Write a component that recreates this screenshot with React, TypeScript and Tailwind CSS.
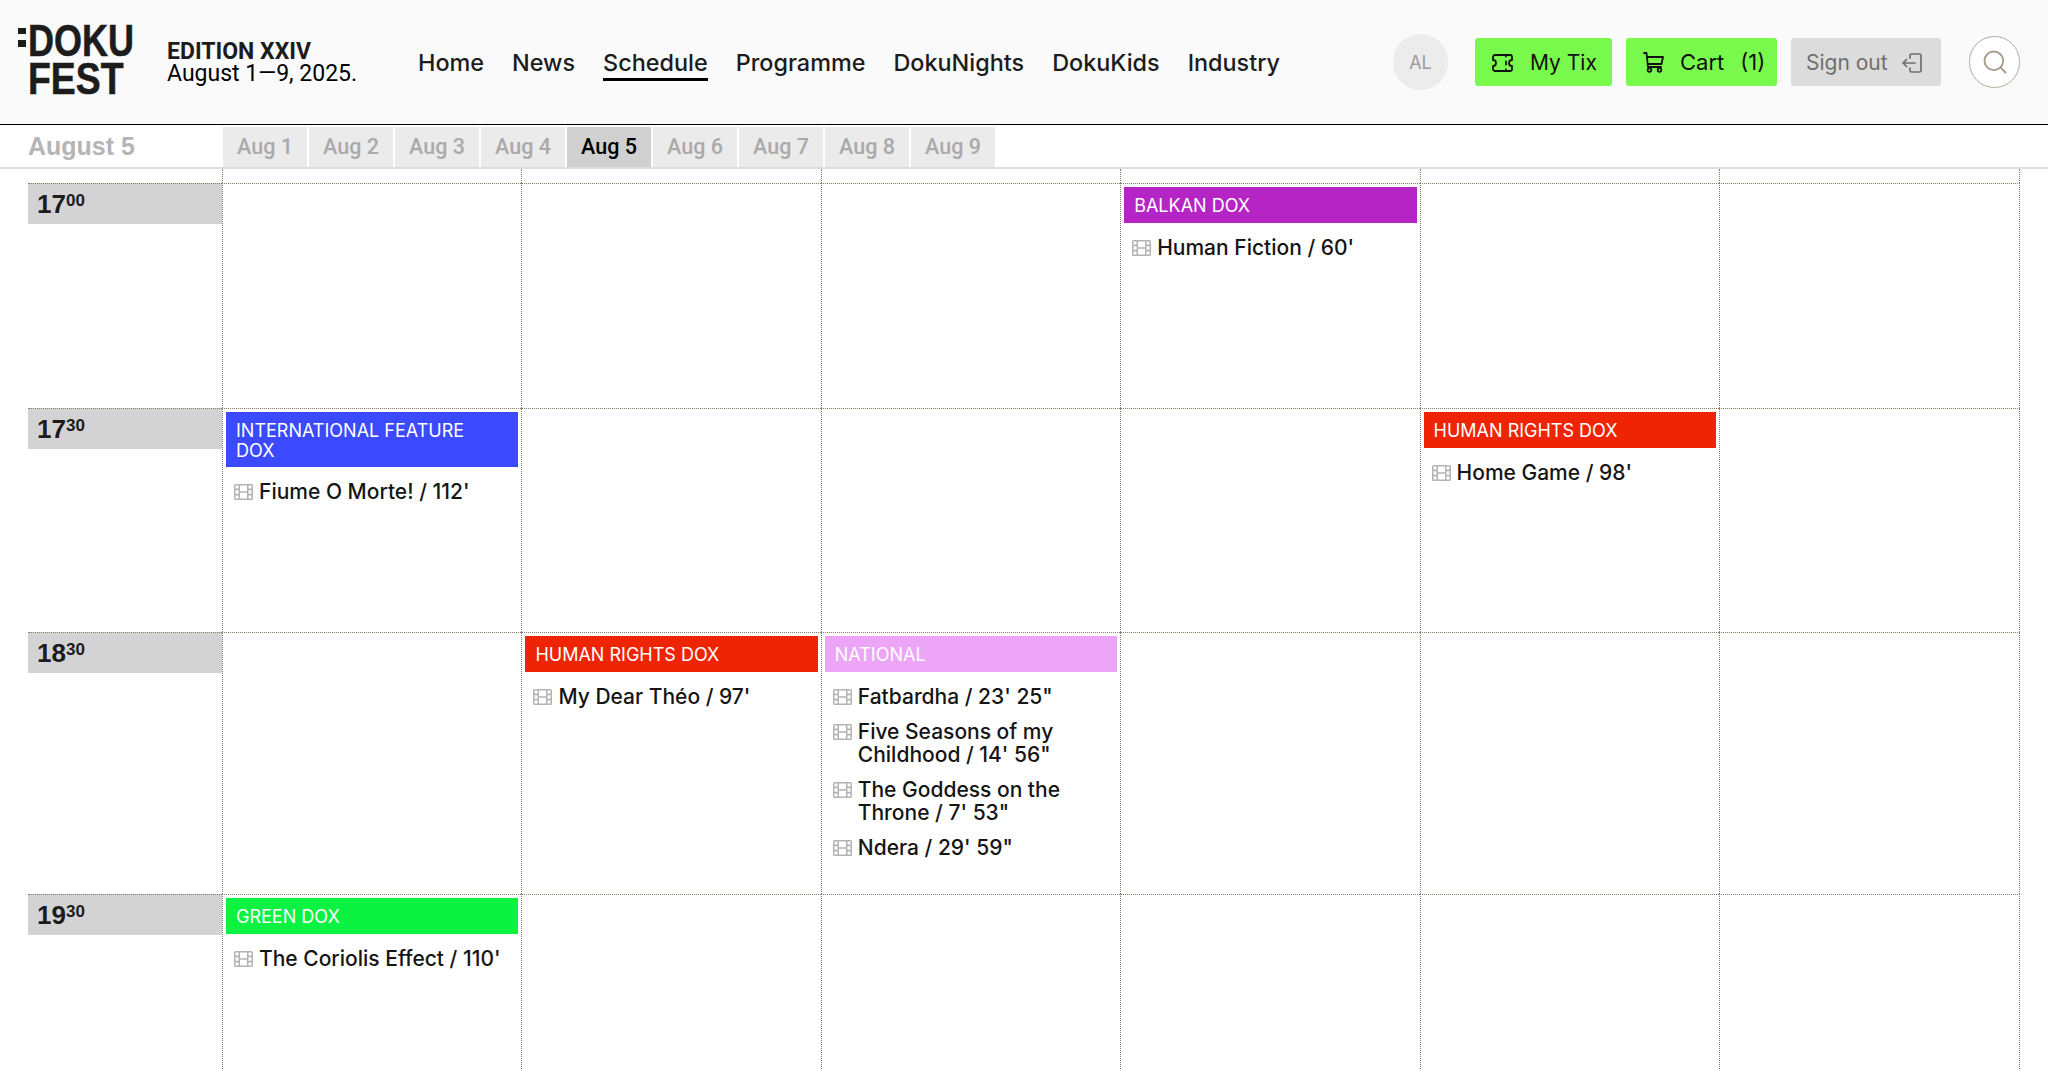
import { Search } from "lucide-react";

const nav = ["Home", "News", "Schedule", "Programme", "DokuNights", "DokuKids", "Industry"];
const days = [1, 2, 3, 4, 5, 6, 7, 8, 9];

type Film = { title: string };
type Slot = { label: string; color: string; films: Film[] };
type Row = { hour: string; min: string; height: string; slots: Record<number, Slot> };

const rows: Row[] = [
  {
    hour: "17",
    min: "00",
    height: "h-[225px]",
    slots: {
      3: { label: "BALKAN DOX", color: "bg-[#b524c4]", films: [{ title: "Human Fiction / 60'" }] },
    },
  },
  {
    hour: "17",
    min: "30",
    height: "h-[224px]",
    slots: {
      0: { label: "INTERNATIONAL FEATURE DOX", color: "bg-[#3b49ff]", films: [{ title: "Fiume O Morte! / 112'" }] },
      4: { label: "HUMAN RIGHTS DOX", color: "bg-[#ee2405]", films: [{ title: "Home Game / 98'" }] },
    },
  },
  {
    hour: "18",
    min: "30",
    height: "h-[262px]",
    slots: {
      1: { label: "HUMAN RIGHTS DOX", color: "bg-[#ee2405]", films: [{ title: "My Dear Théo / 97'" }] },
      2: {
        label: "NATIONAL",
        color: "bg-[#eda6f7]",
        films: [
          { title: "Fatbardha / 23' 25\"" },
          { title: "Five Seasons of my Childhood / 14' 56\"" },
          { title: "The Goddess on the Throne / 7' 53\"" },
          { title: "Ndera / 29' 59\"" },
        ],
      },
    },
  },
  {
    hour: "19",
    min: "30",
    height: "h-[175px]",
    slots: {
      0: { label: "GREEN DOX", color: "bg-[#0bf243]", films: [{ title: "The Coriolis Effect / 110'" }] },
    },
  },
];

function FilmIcon() {
  return (
    <svg viewBox="0 0 19 16" className="w-[19px] h-[16px] mt-[4px] shrink-0" fill="#b4b4b4">
      <path
        fillRule="evenodd"
        d="M1.500 0h16A1.500 1.500 0 0 1 19 1.500v13a1.500 1.500 0 0 1-1.500 1.500h-16A1.500 1.500 0 0 1 0 14.500v-13A1.500 1.500 0 0 1 1.500 0ZM1.500 1.500v3h3v-3Zm0 4.700v3.600h3V6.200Zm0 5.300v3h3v-3ZM6 1.500v5.700h7V1.500Zm0 7.300v5.700h7V8.800Zm8.500-7.300v3h3v-3Zm0 4.700v3.600h3V6.200Zm0 5.300v3h3v-3Z"
      />
    </svg>
  );
}

function TicketIcon() {
  return (
    <svg viewBox="0 0 21 18" className="w-[21px] h-[18px]" fill="none" stroke="#111" strokeWidth="1.8" strokeLinecap="round" strokeLinejoin="round">
      <path d="M3 1h15a2 2 0 0 1 2 2v3a3 3 0 0 0 0 6v3a2 2 0 0 1-2 2H3a2 2 0 0 1-2-2v-3a3 3 0 0 0 0-6V3a2 2 0 0 1 2-2Z" />
      <path d="M14 1v1.500M14 7.500v3M14 15.500V17" />
    </svg>
  );
}

function CartIcon() {
  return (
    <svg viewBox="0 0 21 21" className="w-[21px] h-[21px]" fill="none" stroke="#111" strokeWidth="1.8" strokeLinecap="round" strokeLinejoin="round">
      <path d="M1 1h2.500L5 15h13" />
      <path d="M4 5h16l-1.500 7H4.700" />
      <circle cx="6.500" cy="18" r="1.800" />
      <circle cx="16.500" cy="18" r="1.800" />
    </svg>
  );
}

function SignOutIcon() {
  return (
    <svg viewBox="0 0 20 20" className="w-[20px] h-[20px]" fill="none" stroke="#6f6f6f" strokeWidth="1.7" strokeLinecap="round" strokeLinejoin="round">
      <path d="M8 5V2.500A1.500 1.500 0 0 1 9.500 1h8A1.500 1.500 0 0 1 19 2.500v15a1.500 1.500 0 0 1-1.500 1.500h-8A1.500 1.500 0 0 1 8 17.500V15" />
      <path d="M13 10H1M4.500 6.500 1 10l3.500 3.500" />
    </svg>
  );
}

function Logo() {
  return (
    <div className="relative w-[116px] h-[72px] font-['Liberation_Sans',sans-serif] font-bold text-[#1c1c1c] [-webkit-text-stroke:0.6px_#1c1c1c]">
      <span className="absolute left-0 top-[3px] w-[8px] h-[6px] bg-[#1c1c1c]" />
      <span className="absolute left-0 top-[15px] w-[8px] h-[7px] bg-[#1c1c1c]" />
      <div className="absolute left-[10px] top-[-4px] text-[45px] leading-[40px] origin-left scale-x-[.8]">DOKU</div>
      <div className="absolute left-[10px] top-[36px] text-[45px] leading-[36px] origin-left scale-x-[.83]">FEST</div>
    </div>
  );
}

function Header() {
  return (
    <header className="h-[125px] bg-[#fafafa] border-b-[1.5px] border-black flex items-center font-['Inter',sans-serif]">
      <div className="ml-[18px] mt-[-2px]">
        <Logo />
      </div>
      <div className="ml-[33px] mt-[2px] w-[251px] text-black font-['Roboto',sans-serif]">
        <div className="text-[23px] leading-[22px] font-bold text-[#1c1c1c]">EDITION XXIV</div>
        <div className="text-[23px] leading-[22px] h-[22px]">August 1—9, 2025.</div>
      </div>
      <nav className="flex gap-[28px] mt-[3px]">
        {nav.map((item) => (
          <a
            key={item}
            className={`text-[23.400px] font-medium leading-[31px] text-[#1c1c1c] border-b-[3px] ${item === "Schedule" ? "border-black" : "border-transparent"}`}
          >
            {item}
          </a>
        ))}
      </nav>
      <div className="ml-auto flex items-center mr-[28px]">
        <div className="w-[55px] h-[56px] rounded-full bg-[#ececec] flex items-center justify-center text-[18px] text-[#9c9c9c]">AL</div>
        <a className="ml-[27px] w-[137px] h-[48px] bg-[#7af94d] rounded-[3px] flex items-center gap-[17px] pl-[17px] pt-[1px] text-[21px] text-[#111]">
          <TicketIcon />
          My Tix
        </a>
        <a className="ml-[14px] w-[151px] h-[48px] bg-[#7af94d] rounded-[3px] flex items-center gap-[16px] pl-[17px] pt-[1px] text-[22px] text-[#111]">
          <CartIcon />
          <span>Cart</span>
          <span>(1)</span>
        </a>
        <a className="ml-[14px] w-[150px] h-[48px] bg-[#dcdcdc] rounded-[3px] flex items-center gap-[14px] pl-[15px] pt-[1px] text-[21px] text-[#6f6f6f]">
          Sign out
          <SignOutIcon />
        </a>
        <div className="ml-[28px] w-[51px] h-[52px] rounded-full border border-[#b8ab9c] bg-white flex items-center justify-center text-[#a69a8c]">
          <Search size={28} strokeWidth={1.6} />
        </div>
      </div>
    </header>
  );
}

function DayTabs() {
  return (
    <div className="h-[44px] border-b-2 border-[#dddddd] flex items-start pt-[2px] bg-white">
      <div className="w-[223px] pl-[28px] text-[25px] leading-[38px] font-bold text-[#b5b5b5] font-['Liberation_Sans',sans-serif]">August 5</div>
      <div className="flex gap-[2px] font-['Roboto',sans-serif]">
        {days.map((d) => (
          <a
            key={d}
            className={`w-[84px] h-[40px] flex items-center justify-center text-[21.500px] font-medium ${d === 5 ? "bg-[#d0d0d0] text-black" : "bg-[#ebebeb] text-[#aaaaaa]"}`}
          >
            Aug {d}
          </a>
        ))}
      </div>
    </div>
  );
}

function SlotCell({ slot }: { slot: Slot }) {
  return (
    <div>
      <div className={`m-[3px] pl-[10px] pr-[20px] pt-[9px] pb-[7px] min-h-[36px] text-[18px] leading-[19.500px] text-white ${slot.color}`}>{slot.label}</div>
      <ul className="mt-[13px] px-[11px] flex flex-col gap-[11px]">
        {slot.films.map((f) => (
          <li key={f.title} className="flex gap-[6px] text-[21px] font-medium leading-[23.500px] text-[#151515]">
            <FilmIcon />
            <span>{f.title}</span>
          </li>
        ))}
      </ul>
    </div>
  );
}

function Schedule() {
  return (
    <div className="font-['Inter',sans-serif]">
      <div className="grid grid-cols-[222px_repeat(5,299.4px)_301px] h-[14px]">
        {Array.from({ length: 7 }).map((_, i) => (
          <div key={i} className={i === 0 ? "" : "border-l border-dotted border-[#857c6d] last:border-r"} />
        ))}
      </div>
      {rows.map((row) => (
        <div key={row.hour + row.min} className={`grid grid-cols-[222px_repeat(5,299.4px)_301px] ${row.height}`}>
          <div className="pl-[28px]">
            <div className="h-[41px] bg-[#d3d3d3] border-t border-dotted border-[#857c6d] pl-[9px] pt-[4px] font-['Liberation_Sans',sans-serif] font-bold text-[26px] leading-[32px] text-[#1c1c1c]">
              {row.hour}
              <span className="relative top-[-7px] text-[17px] leading-none">{row.min}</span>
            </div>
          </div>
          {[0, 1, 2, 3, 4, 5].map((col) => (
            <div key={col} className="border-l border-t border-dotted border-[#857c6d] last:border-r">
              {row.slots[col] && <SlotCell slot={row.slots[col]} />}
            </div>
          ))}
        </div>
      ))}
    </div>
  );
}

export default function App() {
  return (
    <div className="h-[1069px] overflow-hidden bg-white">
      <Header />
      <DayTabs />
      <Schedule />
    </div>
  );
}
